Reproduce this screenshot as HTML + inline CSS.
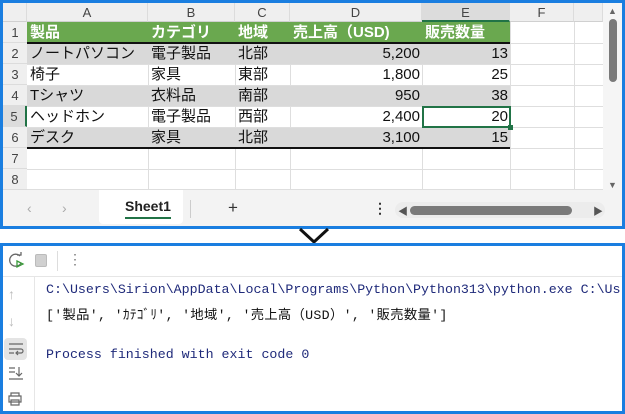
<!DOCTYPE html>
<html><head><meta charset="utf-8"><style>
*{margin:0;padding:0;box-sizing:border-box}
body{width:625px;height:414px;background:#fff;position:relative;overflow:hidden;font-family:"Liberation Sans","Noto Sans CJK JP",sans-serif}
.p{position:absolute}
.top{left:0;top:0;width:625px;height:229px;border:3px solid #1a7ee0;background:#fff}
.bot{left:0;top:243px;width:625px;height:171px;border:3px solid #1a7ee0;background:#fff}
.cell{position:absolute;font-size:15px;line-height:21px;white-space:nowrap;color:#111}
.hd{position:absolute;top:3px;height:19px;background:#efefef;border-right:1px solid #dcdcdc;border-bottom:1px solid #d0d0d0;text-align:center;font-size:13px;line-height:19px;color:#444}
.rh{position:absolute;left:3px;width:24px;height:21px;background:#efefef;border-bottom:1px solid #dcdcdc;text-align:center;font-size:13px;line-height:21px;color:#444}
.vl{position:absolute;top:22px;height:168px;width:1px;background:#dedede}
.hl{position:absolute;left:27px;width:576px;height:1px;background:#dedede}
.mono{position:absolute;font-family:"Liberation Mono","Noto Sans CJK JP",monospace;font-size:13.3px;white-space:nowrap;color:#1f2a7a}
</style></head><body>
<div class="p top"></div>
<div class="hd" style="left:3px;width:24px"></div>
<div class="hd" style="left:27px;width:121px">A</div>
<div class="hd" style="left:148px;width:87px">B</div>
<div class="hd" style="left:235px;width:55px">C</div>
<div class="hd" style="left:290px;width:132px">D</div>
<div class="hd" style="left:422px;width:88px;background:#dcdcdc;border-bottom:2px solid #217346">E</div>
<div class="hd" style="left:510px;width:64px">F</div>
<div class="hd" style="left:574px;width:29px"></div>
<div class="rh" style="top:22px">1</div>
<div class="rh" style="top:43px">2</div>
<div class="rh" style="top:64px">3</div>
<div class="rh" style="top:85px">4</div>
<div class="rh" style="top:106px;background:#dcdcdc;border-right:2px solid #217346">5</div>
<div class="rh" style="top:127px">6</div>
<div class="rh" style="top:148px">7</div>
<div class="rh" style="top:169px">8</div>
<div class="vl" style="left:148px"></div><div class="vl" style="left:235px"></div><div class="vl" style="left:290px"></div><div class="vl" style="left:422px"></div><div class="vl" style="left:510px"></div><div class="vl" style="left:574px"></div>
<div class="hl" style="top:43px"></div><div class="hl" style="top:64px"></div><div class="hl" style="top:85px"></div><div class="hl" style="top:106px"></div><div class="hl" style="top:127px"></div><div class="hl" style="top:148px"></div><div class="hl" style="top:169px"></div><div class="hl" style="top:189px"></div>
<div class="p" style="left:27px;top:22px;width:483px;height:21px;background:#6aa84f"></div>
<div class="p" style="left:27px;top:42px;width:483px;height:2px;background:#111"></div>
<div class="p" style="left:27px;top:44px;width:483px;height:20px;background:#d9d9d9"></div>
<div class="p" style="left:27px;top:86px;width:483px;height:20px;background:#d9d9d9"></div>
<div class="p" style="left:27px;top:128px;width:483px;height:20px;background:#d9d9d9"></div>
<div class="p" style="left:27px;top:147px;width:483px;height:2px;background:#111"></div>
<div class="p" style="left:422px;top:106px;width:89px;height:22px;border:2px solid #217346;background:#fff"></div>
<div class="p" style="left:508px;top:125px;width:5px;height:5px;background:#217346"></div>
<div class="cell" style="left:30px;top:22px;color:#fff;font-weight:bold">製品</div>
<div class="cell" style="left:151px;top:22px;color:#fff;font-weight:bold">カテゴリ</div>
<div class="cell" style="left:238px;top:22px;color:#fff;font-weight:bold">地域</div>
<div class="cell" style="left:293px;top:22px;color:#fff;font-weight:bold">売上高（USD)</div>
<div class="cell" style="left:425px;top:22px;color:#fff;font-weight:bold">販売数量</div>
<div class="cell" style="left:30px;top:43px">ノートパソコン</div><div class="cell" style="left:151px;top:43px">電子製品</div><div class="cell" style="left:238px;top:43px">北部</div><div class="cell" style="right:205px;top:43px">5,200</div><div class="cell" style="right:117px;top:43px">13</div>
<div class="cell" style="left:30px;top:64px">椅子</div><div class="cell" style="left:151px;top:64px">家具</div><div class="cell" style="left:238px;top:64px">東部</div><div class="cell" style="right:205px;top:64px">1,800</div><div class="cell" style="right:117px;top:64px">25</div>
<div class="cell" style="left:30px;top:85px">Tシャツ</div><div class="cell" style="left:151px;top:85px">衣料品</div><div class="cell" style="left:238px;top:85px">南部</div><div class="cell" style="right:205px;top:85px">950</div><div class="cell" style="right:117px;top:85px">38</div>
<div class="cell" style="left:30px;top:106px">ヘッドホン</div><div class="cell" style="left:151px;top:106px">電子製品</div><div class="cell" style="left:238px;top:106px">西部</div><div class="cell" style="right:205px;top:106px">2,400</div><div class="cell" style="right:117px;top:106px">20</div>
<div class="cell" style="left:30px;top:127px">デスク</div><div class="cell" style="left:151px;top:127px">家具</div><div class="cell" style="left:238px;top:127px">北部</div><div class="cell" style="right:205px;top:127px">3,100</div><div class="cell" style="right:117px;top:127px">15</div>
<div class="p" style="left:603px;top:3px;width:19px;height:187px;background:#f5f5f5"></div>
<div class="p" style="left:608px;top:6px;font-size:9px;color:#666">▲</div>
<div class="p" style="left:608px;top:180px;font-size:9px;color:#666">▼</div>
<div class="p" style="left:609px;top:19px;width:8px;height:63px;border-radius:4px;background:#7a7a7a"></div>
<div class="p" style="left:3px;top:190px;width:619px;height:36px;background:#f3f3f3"></div>
<div class="p" style="left:27px;top:200px;font-size:14px;color:#aaa">&lsaquo;</div>
<div class="p" style="left:62px;top:200px;font-size:14px;color:#aaa">&rsaquo;</div>
<div class="p" style="left:99px;top:190px;width:84px;height:34px;background:#fff;border-radius:0 0 4px 4px"></div>
<div class="p" style="left:125px;top:198px;font-size:14px;font-weight:bold;color:#222">Sheet1</div>
<div class="p" style="left:125px;top:217px;width:46px;height:2px;background:#217346"></div>
<div class="p" style="left:190px;top:200px;width:1px;height:18px;background:#ccc"></div>
<div class="p" style="left:228px;top:198px;font-size:17px;color:#333">+</div>
<div class="p" style="left:373px;top:200px;font-size:14px;color:#333;font-weight:bold">⋮</div>
<div class="p" style="left:395px;top:202px;width:210px;height:16px;border-radius:8px;background:#ececec"></div>
<div class="p" style="left:398px;top:203px;font-size:10px;color:#555">◀</div>
<div class="p" style="left:593px;top:203px;font-size:10px;color:#555">▶</div>
<div class="p" style="left:410px;top:206px;width:162px;height:9px;border-radius:5px;background:#7a7a7a"></div>
<svg class="p" style="left:296px;top:227px" width="36" height="18"><path d="M4 2 L18 15 L32 2" fill="none" stroke="#111" stroke-width="3"/></svg>
<div class="p bot"></div>
<svg class="p" style="left:7px;top:251px" width="18" height="18"><path d="M13 5 A6 6 0 1 0 14 12" fill="none" stroke="#666" stroke-width="1.3"/><path d="M10 4 L14 4 L14 1" fill="none" stroke="#666" stroke-width="1.3"/><path d="M10 10 L16 13 L10 16Z" fill="none" stroke="#3a9a3a" stroke-width="1.3"/></svg>
<div class="p" style="left:35px;top:254px;width:12px;height:13px;border-radius:2px;background:#d0d0d0;border:1px solid #bbb"></div>
<div class="p" style="left:57px;top:251px;width:1px;height:20px;background:#ddd"></div>
<div class="p" style="left:68px;top:251px;font-size:14px;color:#777">⋮</div>
<div class="p" style="left:3px;top:276px;width:619px;height:1px;background:#e6e6e6"></div>
<div class="p" style="left:34px;top:277px;width:1px;height:134px;background:#e6e6e6"></div>
<div class="p" style="left:8px;top:286px;font-size:14px;color:#bbb">↑</div>
<div class="p" style="left:8px;top:313px;font-size:14px;color:#bbb">↓</div>
<div class="p" style="left:4px;top:338px;width:23px;height:22px;border-radius:4px;background:#e4e4e4"></div>
<svg class="p" style="left:7px;top:341px" width="18" height="16"><path d="M2 3H16M2 8H14a2 2 0 0 1 0 4H10M2 12H7M11 10l-2 2 2 2" fill="none" stroke="#666" stroke-width="1.2"/></svg>
<svg class="p" style="left:7px;top:365px" width="18" height="16"><path d="M2 3H8M2 7H8M2 14H16M12 2V11M9 8l3 3 3-3" fill="none" stroke="#666" stroke-width="1.2"/></svg>
<svg class="p" style="left:6px;top:391px" width="18" height="16"><path d="M5 5V2H13V5M3 5H15V11H3ZM5 9H13V14H5Z" fill="none" stroke="#666" stroke-width="1.2"/></svg>
<div class="mono" style="left:46px;top:282px">C:\Users\Sirion\AppData\Local\Programs\Python\Python313\python.exe C:\Us</div>
<div class="mono" style="left:46px;top:304px;color:#111;letter-spacing:0.3px">['製品', 'ｶﾃｺﾞﾘ', '地域', '売上高（USD）', '販売数量']</div>
<div class="mono" style="left:46px;top:347px">Process finished with exit code 0</div>
</body></html>
